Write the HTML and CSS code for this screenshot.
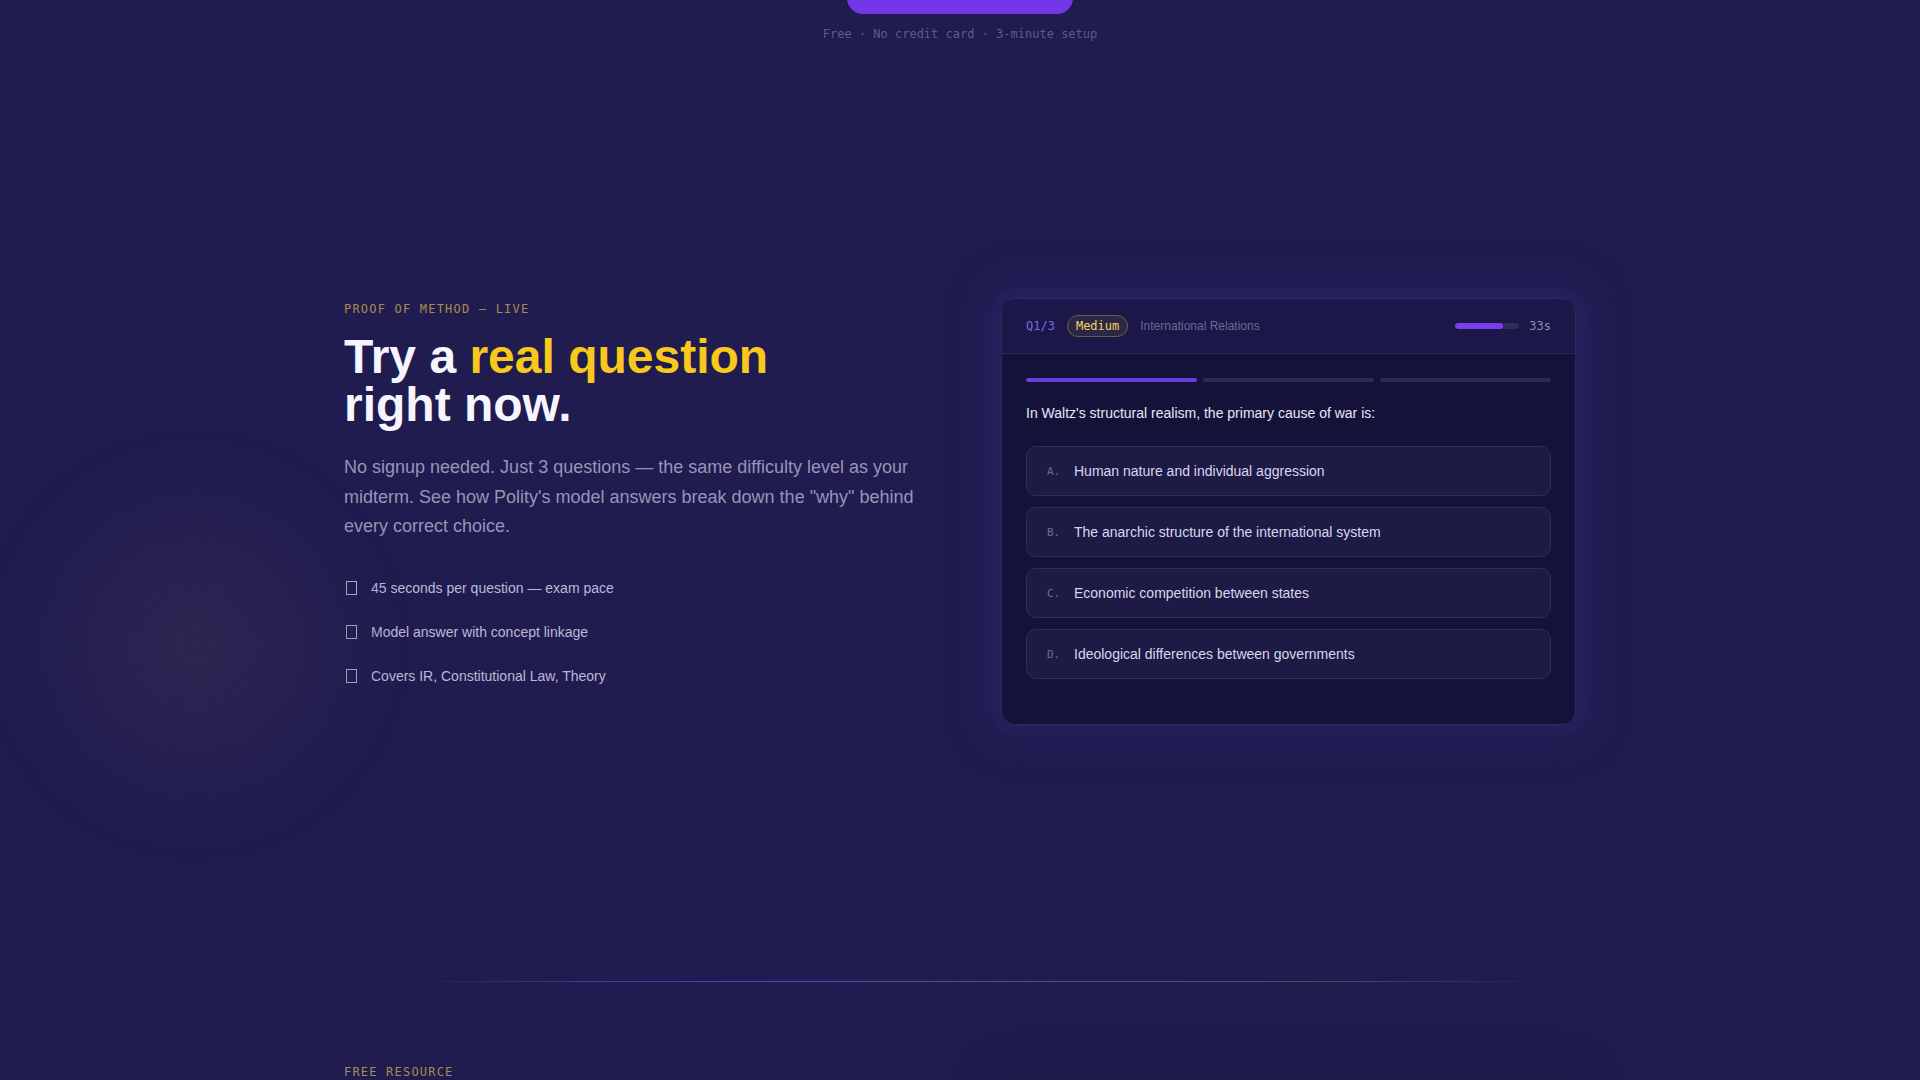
FILE: index.html
```html
<!DOCTYPE html>
<html lang="en">
<head>
    <meta charset="UTF-8">
    <meta name="viewport" content="width=device-width, initial-scale=1.0">
    <title>Polity — Try a real question</title>
    <link rel="stylesheet" href="styles.css">
</head>
<body>
    <div class="glow-blob"></div>

    <div class="cta-end">
        <button class="cta-btn" aria-label="Start free"></button>
        <p class="cta-note">Free · No credit card · 3-minute setup</p>
    </div>

    <section class="demo">
        <div class="container demo-grid">
            <div class="demo-copy">
                <p class="eyebrow">PROOF OF METHOD — LIVE</p>
                <h2>Try a <span class="hl">real question</span><br>right now.</h2>
                <p class="lead">No signup needed. Just 3 questions — the same difficulty level as your midterm. See how Polity's model answers break down the "why" behind every correct choice.</p>
                <ul class="perks">
                    <li><span class="box"></span>45 seconds per question — exam pace</li>
                    <li><span class="box"></span>Model answer with concept linkage</li>
                    <li><span class="box"></span>Covers IR, Constitutional Law, Theory</li>
                </ul>
            </div>

            <div class="quiz-card">
                <div class="quiz-head">
                    <span class="q-num">Q1/3</span>
                    <span class="badge">Medium</span>
                    <span class="topic">International Relations</span>
                    <div class="timer">
                        <div class="timer-track"><div class="timer-fill" style="width: 75%"></div></div>
                        <span class="timer-sec">33s</span>
                    </div>
                </div>
                <div class="quiz-body">
                    <div class="steps">
                        <span class="step done"></span>
                        <span class="step"></span>
                        <span class="step"></span>
                    </div>
                    <p class="question">In Waltz's structural realism, the primary cause of war is:</p>
                    <div class="options">
                        <button class="option"><span class="opt-key">A.</span>Human nature and individual aggression</button>
                        <button class="option"><span class="opt-key">B.</span>The anarchic structure of the international system</button>
                        <button class="option"><span class="opt-key">C.</span>Economic competition between states</button>
                        <button class="option"><span class="opt-key">D.</span>Ideological differences between governments</button>
                    </div>
                </div>
            </div>
        </div>
    </section>

    <div class="container">
        <div class="divider"></div>
    </div>

    <section class="resource">
        <div class="container resource-grid">
            <p class="eyebrow">FREE RESOURCE</p>
            <div class="resource-card"></div>
        </div>
    </section>
</body>
</html>
```

FILE: styles.css
```css
body {
    margin: 0;
    padding: 0;
    background: #201c4f;
    color: #f4f3ff;
    font-family: "Liberation Sans", Arial, sans-serif;
    overflow: hidden;
    position: relative;
    min-height: 1080px;
}

.container {
    max-width: 1232px;
    margin: 0 auto;
}

.glow-blob {
    position: absolute;
    left: 0;
    top: 450px;
    width: 390px;
    height: 390px;
    border-radius: 50%;
    background: radial-gradient(circle, rgba(48, 40, 82, 0.85) 0%, rgba(42, 36, 82, 0.55) 40%, rgba(32, 28, 79, 0) 70%);
    filter: blur(16px);
    pointer-events: none;
}

/* end of the previous CTA block */
.cta-end {
    display: flex;
    flex-direction: column;
    align-items: center;
}
.cta-btn {
    width: 226px;
    height: 52px;
    margin-top: -38px;
    border: none;
    border-radius: 16px;
    background: #7437e8;
}
.cta-note {
    margin: 13px 0 0;
    font-family: "DejaVu Sans Mono", monospace;
    font-size: 12px;
    line-height: 14px;
    color: #5e5a8c;
}

.demo {
    padding: 257px 0 256px;
}
.demo-grid {
    display: grid;
    grid-template-columns: 1fr 1fr;
    column-gap: 82px;
    align-items: start;
}
.demo-copy {
    padding-top: 2px;
}

.eyebrow {
    margin: 0;
    font-family: "DejaVu Sans Mono", monospace;
    font-size: 12px;
    line-height: 18px;
    letter-spacing: 0.1em;
    color: #a58d4d;
}

.demo-copy h2 {
    margin: 15px 0 0;
    font-size: 48px;
    line-height: 48px;
    font-weight: 700;
    color: #f6f5ff;
}
.hl {
    color: #f8c81c;
}

.lead {
    margin: 24px 0 0;
    font-size: 18px;
    line-height: 1.65;
    color: #9894b9;
}

.perks {
    list-style: none;
    margin: 36px 0 0;
    padding: 0;
    display: flex;
    flex-direction: column;
    gap: 24px;
}
.perks li {
    display: flex;
    align-items: center;
    font-size: 14px;
    line-height: 20px;
    color: #bcb8d8;
}
.box {
    width: 9px;
    height: 12px;
    border: 1.5px solid #c3bfe0;
    margin: 0 14px 0 2px;
    flex-shrink: 0;
}

/* quiz card */
.quiz-card {
    border: 1px solid #2b2763;
    border-radius: 14px;
    background: #15123a;
    overflow: hidden;
    box-shadow: 0 0 0 10px rgba(40, 34, 92, 0.4), 0 0 30px 22px rgba(38, 32, 92, 0.55);
}
.quiz-head {
    display: flex;
    align-items: center;
    gap: 12px;
    padding: 16px 24px;
    background: #1b1749;
    border-bottom: 1px solid #2a2662;
}
.q-num {
    font-family: "DejaVu Sans Mono", monospace;
    font-size: 12px;
    color: #7c68e6;
}
.badge {
    font-family: "DejaVu Sans Mono", monospace;
    font-size: 12px;
    line-height: 14px;
    padding: 3px 8px;
    border-radius: 999px;
    border: 1px solid #6a5d45;
    background: #2b2745;
    color: #f2d65e;
}
.topic {
    font-size: 12px;
    color: #6c6894;
}
.timer {
    margin-left: auto;
    display: flex;
    align-items: center;
    gap: 10px;
}
.timer-track {
    width: 64px;
    height: 6px;
    border-radius: 3px;
    background: #2f2b5b;
    overflow: hidden;
}
.timer-fill {
    height: 100%;
    border-radius: 3px;
    background: #7b3cec;
}
.timer-sec {
    font-family: "DejaVu Sans Mono", monospace;
    font-size: 12px;
    color: #8f8bb2;
}

.quiz-body {
    padding: 24px 24px 45px;
}
.steps {
    display: flex;
    gap: 6px;
}
.step {
    flex: 1;
    height: 4px;
    border-radius: 2px;
    background: #2d2955;
}
.step.done {
    background: #6a3fd9;
}
.question {
    margin: 20px 0 22px;
    font-size: 14px;
    line-height: 22px;
    color: #e8e6f6;
}
.options {
    display: flex;
    flex-direction: column;
    gap: 11px;
}
.option {
    display: flex;
    align-items: center;
    width: 100%;
    height: 50px;
    padding: 0 20px;
    border: 1px solid #302c5d;
    border-radius: 10px;
    background: #1d1a46;
    font-family: "Liberation Sans", Arial, sans-serif;
    font-size: 14px;
    color: #d9d7ed;
    text-align: left;
    cursor: pointer;
}
.option:hover {
    border-color: #5b4ad0;
}
.opt-key {
    width: 14px;
    margin-right: 13px;
    font-family: "DejaVu Sans Mono", monospace;
    font-size: 11px;
    color: #6e6a95;
}

.divider {
    height: 1px;
    margin: 0 20px 0 60px;
    background: linear-gradient(90deg, rgba(90, 70, 220, 0) 0%, rgba(96, 78, 225, 0.5) 15%, rgba(96, 78, 225, 0.8) 32%, rgba(150, 120, 120, 0.55) 58%, rgba(190, 150, 90, 0.35) 80%, rgba(190, 150, 90, 0) 100%);
}

.resource {
    padding-top: 81px;
}
.resource-grid {
    display: grid;
    grid-template-columns: 1fr 1fr;
    column-gap: 82px;
    align-items: start;
}
.resource-card {
    height: 300px;
    margin-top: 14px;
    border-radius: 14px;
    background: rgba(26, 22, 66, 0.4);
    box-shadow: 0 0 30px 18px rgba(30, 26, 80, 0.45);
}
```
